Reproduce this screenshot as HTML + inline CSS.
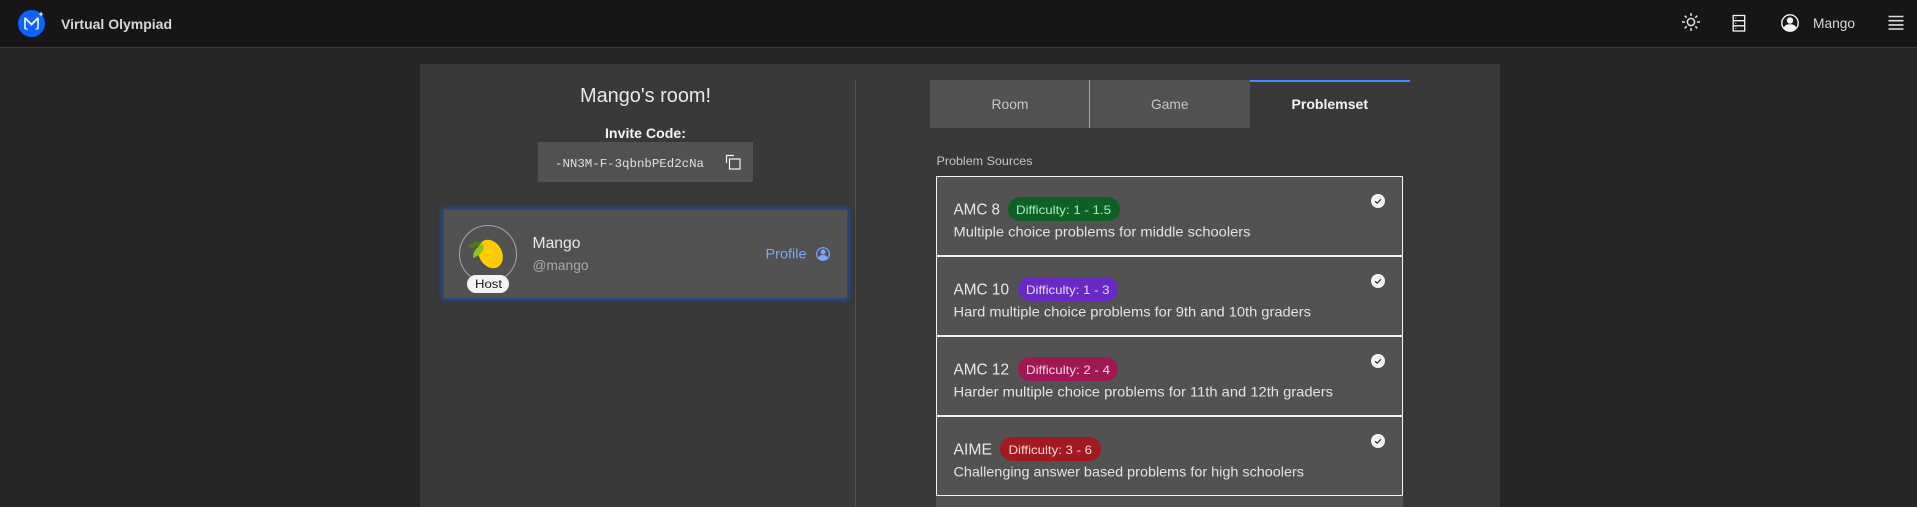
<!DOCTYPE html>
<html><head><meta charset="utf-8"><title>Virtual Olympiad</title>
<style>
html,body{margin:0;padding:0;background:#262626;width:1917px;height:507px;overflow:hidden}
.b{position:absolute;box-sizing:border-box}
svg{position:absolute;left:0;top:0}
text{font-family:"Liberation Sans",sans-serif}
</style></head><body>
<div class="b" style="left:0;top:0;width:1917px;height:47px;background:#161616"></div>
<div class="b" style="left:0;top:47px;width:1917px;height:1px;background:#393939"></div>
<div class="b" style="left:420px;top:64px;width:1080px;height:443px;background:#393939"></div>
<div class="b" style="left:855px;top:80px;width:1px;height:427px;background:#525252"></div>
<div class="b" style="left:538px;top:142px;width:215px;height:40px;background:#525252"></div>
<div class="b" style="left:444px;top:210px;width:403px;height:88px;background:#525252;box-shadow:0 0 5px 2px rgba(15,98,254,.55)"></div>
<div class="b" style="left:459px;top:225px;width:58px;height:58px;border:1px solid #a8a8a8;border-radius:50%"></div>
<div class="b" style="left:467px;top:275px;width:42px;height:18px;background:#f4f4f4;border-radius:9px"></div>
<div class="b" style="left:930px;top:80px;width:159px;height:48px;background:#525252"></div>
<div class="b" style="left:1089px;top:80px;width:1px;height:48px;background:#a8a8a8"></div>
<div class="b" style="left:1090px;top:80px;width:160px;height:48px;background:#525252"></div>
<div class="b" style="left:1250px;top:80px;width:160px;height:2px;background:#4589ff"></div>
<div class="b" style="left:936px;top:176px;width:467px;height:80px;background:#525252;border:1px solid #f4f4f4"></div>
<div class="b" style="left:936px;top:256px;width:467px;height:80px;background:#525252;border:1px solid #f4f4f4"></div>
<div class="b" style="left:936px;top:336px;width:467px;height:80px;background:#525252;border:1px solid #f4f4f4"></div>
<div class="b" style="left:936px;top:416px;width:467px;height:80px;background:#525252;border:1px solid #f4f4f4"></div>
<div class="b" style="left:936px;top:496px;width:467px;height:11px;background:#525252"></div>
<div class="b" style="left:1008px;top:197px;width:112px;height:24px;background:#0e6027;border-radius:12px"></div>
<div class="b" style="left:1018px;top:277px;width:100px;height:24px;background:#6929c4;border-radius:12px"></div>
<div class="b" style="left:1018px;top:357px;width:100px;height:24px;background:#9f1853;border-radius:12px"></div>
<div class="b" style="left:1000px;top:437px;width:101px;height:24px;background:#a2191f;border-radius:12px"></div>

<svg width="1917" height="507" viewBox="0 0 1917 507" xmlns="http://www.w3.org/2000/svg">
<!-- logo -->
<circle cx="31.500" cy="23.500" r="13.500" fill="#0f62fe"/>
<path d="M25 18l6.500 6.500 6.500-6.500" fill="none" stroke="#fff" stroke-width="1.800"/>
<path d="M25 17.500v11.500M38 17.500v11.500" fill="none" stroke="#fff" stroke-width="1.500"/>
<path d="M25 29h2.500M38 29h-2.500" stroke="#fff" stroke-width="1.100"/>
<path d="M41 11.500l.9 1.700 1.700.9-1.700.9-.9 1.700-.9-1.700-1.700-.9 1.700-.9z" fill="#c6d8ff"/>
<text x="61" y="29" font-size="14" font-weight="700" fill="#d8d8d8" textLength="111" lengthAdjust="spacingAndGlyphs">Virtual Olympiad</text>

<!-- header icons -->
<g fill="none" stroke="#e0e0e0" stroke-width="1.500">
<circle cx="1691" cy="22" r="3.600"/>
<path d="M1691 13v3M1691 28v3M1682 22h3M1697 22h3M1684.700 15.700l2 2M1695.300 26.300l2 2M1697.300 15.700l-2 2M1686.700 26.300l-2 2"/>
</g>
<g fill="none" stroke="#f4f4f4" stroke-width="1.300">
<rect x="1733.200" y="15.500" width="11.500" height="15.500"/>
<path d="M1733.200 20.700h11.500M1733.200 25.800h11.500"/>
</g>
<path d="M1735 18h1.500M1735 23.300h1.500M1735 28.400h1.500" stroke="#a8a8a8" stroke-width="1"/>
<circle cx="1790" cy="23" r="8.200" fill="none" stroke="#f4f4f4" stroke-width="1.400"/>
<circle cx="1790" cy="20.500" r="3.200" fill="#f4f4f4"/>
<path d="M1783.500 28c1.200-3 3.500-3.800 6.500-3.800s5.300.8 6.500 3.800c-1.500 2-4 3.200-6.500 3.200s-5-1.200-6.500-3.200z" fill="#f4f4f4"/>
<text x="1813" y="28" font-size="14" fill="#d8d8d8" textLength="42" lengthAdjust="spacingAndGlyphs">Mango</text>
<path d="M1888.500 16.500h15M1888.500 20.700h15M1888.500 24.900h15M1888.500 29h15" stroke="#e0e0e0" stroke-width="1.600" fill="none"/>

<!-- left column -->
<text x="580" y="102" font-size="20" fill="#e8e8e8" textLength="131" lengthAdjust="spacingAndGlyphs">Mango's room!</text>
<text x="605" y="138" font-size="14" font-weight="700" fill="#f4f4f4" textLength="81" lengthAdjust="spacingAndGlyphs">Invite Code:</text>
<text x="555" y="167" font-size="12" fill="#e0e0e0" style="font-family:'Liberation Mono',monospace" textLength="149" lengthAdjust="spacingAndGlyphs">-NN3M-F-3qbnbPEd2cNa</text>
<g fill="none" stroke="#f4f4f4" stroke-width="1.200">
<rect x="729.500" y="159" width="10.500" height="10"/>
<path d="M726.500 163v-7.500h7.500"/>
</g>

<!-- mango -->
<ellipse cx="490.500" cy="254" rx="11.500" ry="15" fill="#ffcb05" transform="rotate(-28 490.500 254)"/>
<path d="M467 247c4-4 10-6 15-5-2 4-8 7-15 5z" fill="#4d7d10"/>
<path d="M473 258c0-6 3-11 10-14 2 6-2 11-10 14z" fill="#8cc318"/>

<text x="475" y="288" font-size="12" fill="#161616" textLength="27" lengthAdjust="spacingAndGlyphs">Host</text>
<text x="532.500" y="248" font-size="16" fill="#e8e8e8" textLength="48" lengthAdjust="spacingAndGlyphs">Mango</text>
<text x="532.500" y="270" font-size="14" fill="#a8a8a8" textLength="56" lengthAdjust="spacingAndGlyphs">@mango</text>
<text x="765.500" y="258.500" font-size="14" fill="#78a9ff" textLength="41" lengthAdjust="spacingAndGlyphs">Profile</text>
<circle cx="823" cy="254" r="6.300" fill="none" stroke="#78a9ff" stroke-width="1.200"/>
<circle cx="823" cy="252" r="2.500" fill="#78a9ff"/>
<path d="M818.500 257.500c1-2 2.500-2.500 4.500-2.500s3.500.5 4.500 2.500c-1 1.500-2.700 2.500-4.500 2.500s-3.500-1-4.500-2.500z" fill="#78a9ff"/>

<!-- tabs -->
<text x="991.500" y="109" font-size="14" fill="#c6c6c6" textLength="37" lengthAdjust="spacingAndGlyphs">Room</text>
<text x="1151" y="109" font-size="14" fill="#c6c6c6" textLength="37.500" lengthAdjust="spacingAndGlyphs">Game</text>
<text x="1291.500" y="109" font-size="14" font-weight="700" fill="#f4f4f4" textLength="76.500" lengthAdjust="spacingAndGlyphs">Problemset</text>
<text x="936.500" y="165" font-size="12" fill="#c6c6c6" textLength="96" lengthAdjust="spacingAndGlyphs">Problem Sources</text>

<!-- tiles -->
<text x="953.500" y="214.500" font-size="16" fill="#e8e8e8" textLength="46.500" lengthAdjust="spacingAndGlyphs">AMC 8</text>
<text x="1016" y="214" font-size="12" fill="#a7f0ba" textLength="95" lengthAdjust="spacingAndGlyphs">Difficulty: 1 - 1.5</text>
<text x="953.500" y="236.500" font-size="14" fill="#e4e4e4" textLength="297" lengthAdjust="spacingAndGlyphs">Multiple choice problems for middle schoolers</text>

<text x="953.500" y="294.500" font-size="16" fill="#e8e8e8" textLength="55.500" lengthAdjust="spacingAndGlyphs">AMC 10</text>
<text x="1026" y="294" font-size="12" fill="#e8daff" textLength="83.500" lengthAdjust="spacingAndGlyphs">Difficulty: 1 - 3</text>
<text x="953.500" y="316.500" font-size="14" fill="#e4e4e4" textLength="357.500" lengthAdjust="spacingAndGlyphs">Hard multiple choice problems for 9th and 10th graders</text>

<text x="953.500" y="374.500" font-size="16" fill="#e8e8e8" textLength="55.500" lengthAdjust="spacingAndGlyphs">AMC 12</text>
<text x="1026" y="374" font-size="12" fill="#ffd6e8" textLength="84" lengthAdjust="spacingAndGlyphs">Difficulty: 2 - 4</text>
<text x="953.500" y="396.500" font-size="14" fill="#e4e4e4" textLength="379.500" lengthAdjust="spacingAndGlyphs">Harder multiple choice problems for 11th and 12th graders</text>

<text x="953.500" y="454.500" font-size="16" fill="#e8e8e8" textLength="38.500" lengthAdjust="spacingAndGlyphs">AIME</text>
<text x="1008.500" y="454" font-size="12" fill="#ffd7d9" textLength="83.500" lengthAdjust="spacingAndGlyphs">Difficulty: 3 - 6</text>
<text x="953.500" y="476.500" font-size="14" fill="#e4e4e4" textLength="350.500" lengthAdjust="spacingAndGlyphs">Challenging answer based problems for high schoolers</text>

<!-- checks -->
<g>
<circle cx="1378" cy="201" r="7" fill="#f4f4f4"/><path d="M1375 201.200l2.200 2 3.800-4" fill="none" stroke="#393939" stroke-width="1.300"/>
<circle cx="1378" cy="281" r="7" fill="#f4f4f4"/><path d="M1375 281.200l2.200 2 3.800-4" fill="none" stroke="#393939" stroke-width="1.300"/>
<circle cx="1378" cy="361" r="7" fill="#f4f4f4"/><path d="M1375 361.200l2.200 2 3.800-4" fill="none" stroke="#393939" stroke-width="1.300"/>
<circle cx="1378" cy="441" r="7" fill="#f4f4f4"/><path d="M1375 441.200l2.200 2 3.800-4" fill="none" stroke="#393939" stroke-width="1.300"/>
</g>
</svg>
</body></html>
